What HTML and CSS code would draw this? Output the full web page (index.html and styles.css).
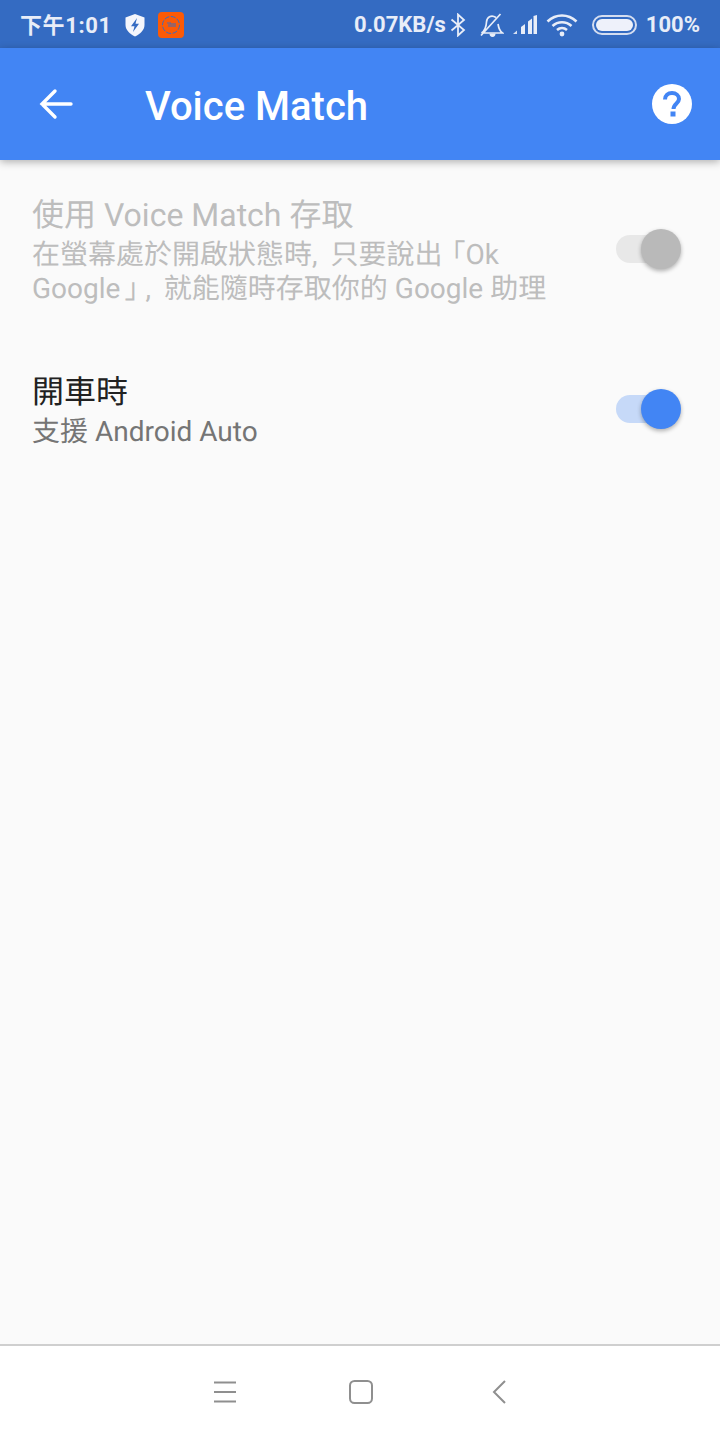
FILE: index.html
```html
<!DOCTYPE html>
<html lang="zh-Hant">

<head>
    <meta charset="UTF-8">
    <meta name="viewport" content="width=device-width, initial-scale=1.0">
    <title>Voice Match</title>
    <link rel="stylesheet" href="styles.css">
</head>

<body>
    <div class="screen">
        <div class="status-bar">
            <div class="status-left">
                <span class="clock">下午1:01</span>
                <svg class="shield" width="22" height="24" viewBox="0 0 22 24">
                    <path d="M11 1 L20.5 4.5 V12 C20.5 17 16.5 20.8 11 23.5 C5.5 20.8 1.5 17 1.5 12 V4.5 Z" fill="#f4f6fc"/>
                    <path d="M13 5 L7 13.2 H10.5 L9 19 L15 10.8 H11.5 Z" fill="#346bc2"/>
                </svg>
                <svg class="mi-icon" width="26" height="26" viewBox="0 0 26 26">
                    <rect width="26" height="26" rx="4" fill="#fb5a06"/>
                    <circle cx="13" cy="13" r="8.5" fill="none" stroke="#3a6cc0" stroke-width="1" stroke-dasharray="5 1.6"/>
                    <path d="M9 11 H13 V15 M11 12 V15 M15 11 V15 M17 11 V15" fill="none" stroke="#3a6cc0" stroke-width="1"/>
                </svg>
            </div>
            <div class="status-right">
                <span class="speed">0.07KB/s</span>
                <svg class="icon-bt" width="16" height="24" viewBox="0 0 16 24">
                    <path d="M1.5 6.5 L14 17 L8 22.5 V1.5 L14 7 L1.5 17.5" fill="none" stroke="#e8edf8" stroke-width="1.8"/>
                </svg>
                <svg class="icon-bell" width="24" height="24" viewBox="0 0 24 24">
                    <path d="M1.5 20 H22.5 C19.5 18 18.5 14 18 11 M16 4.5 C11 1 6.8 4.5 6.5 9 C6.3 13 5 17.5 1.5 20 M1 22.5 L20.5 1" fill="none" stroke="#e8edf8" stroke-width="1.7"/>
                    <path d="M9.5 20.5 A3 3.4 0 0 0 15.5 20.5 Z" fill="#e8edf8"/>
                </svg>
                <svg class="icon-signal" width="24" height="20" viewBox="0 0 24 20">
                    <polygon points="0,19 4,15.5 4,19" fill="#d6e0f2"/>
                    <polygon points="8,19 8,12 12,9 12,19" fill="#e8edf8"/>
                    <polygon points="15,19 15,6.5 19,3.5 19,19" fill="#e8edf8"/>
                    <polygon points="20.5,19 20.5,1 24,0 24,19" fill="#e8edf8"/>
                </svg>
                <svg class="icon-wifi" width="32" height="24" viewBox="0 0 32 24">
                    <path d="M1.5 8.5 C10 0.5 22 0.5 30.5 8.5 M6.5 13 C12 8 20 8 25.5 13 M11 17 C14 14.5 18 14.5 21 17" fill="none" stroke="#e8edf8" stroke-width="2.6"/>
                    <circle cx="16" cy="21" r="2.4" fill="#e8edf8"/>
                </svg>
                <span class="battery"><span class="battery-fill"></span></span>
                <span class="percent">100%</span>
            </div>
        </div>

        <div class="app-bar">
            <svg class="back" width="36" height="32" viewBox="0 0 36 32">
                <path d="M32 16 H3 M16 3 L3 16 L16 29" fill="none" stroke="#fff" stroke-width="3.4" stroke-linecap="round" stroke-linejoin="miter"/>
            </svg>
            <h1 class="title">Voice Match</h1>
            <svg class="help" width="40" height="40" viewBox="0 0 40 40">
                <circle cx="20" cy="20" r="20" fill="#fff"/>
                <path d="M13 15.5 C13 11.5 16 9 20 9 C24 9 27 11.5 27 15 C27 19.5 21.5 19.5 21.5 25" fill="none" stroke="#4285f4" stroke-width="4"/>
                <rect x="18.5" y="27.5" width="5" height="5" fill="#4285f4"/>
            </svg>
        </div>

        <div class="content">
            <div class="setting disabled">
                <div class="setting-text">
                    <div class="setting-title">使用 Voice Match 存取</div>
                    <div class="setting-sub">在螢幕處於開啟狀態時<span class="comma">,</span> 只要說出<span class="open-quote">「</span>Ok<br>Google<span class="close-quote">」</span><span class="comma">,</span> 就能隨時存取你的 Google 助理</div>
                </div>
                <div class="switch"><span class="track"></span><span class="thumb"></span></div>
            </div>
            <div class="setting">
                <div class="setting-text">
                    <div class="setting-title">開車時</div>
                    <div class="setting-sub">支援 Android Auto</div>
                </div>
                <div class="switch on"><span class="track"></span><span class="thumb"></span></div>
            </div>
        </div>

        <div class="nav-bar">
            <svg class="nav-menu" width="24" height="22" viewBox="0 0 24 22">
                <path d="M1 1.5 H23 M1 11 H23 M1 20.5 H23" fill="none" stroke="#8f8f8f" stroke-width="2"/>
            </svg>
            <svg class="nav-home" width="24" height="24" viewBox="0 0 24 24">
                <rect x="1" y="1" width="22" height="22" rx="4.5" fill="none" stroke="#8f8f8f" stroke-width="2"/>
            </svg>
            <svg width="14" height="24" viewBox="0 0 14 24">
                <path d="M13 1 L2 12 L13 23" fill="none" stroke="#8f8f8f" stroke-width="2"/>
            </svg>
        </div>
    </div>
</body>

</html>
```

FILE: styles.css
```css
* {
    box-sizing: border-box;
}

body {
    margin: 0;
    font-family: Roboto, "Noto Sans CJK TC", sans-serif;
}

svg {
    display: block;
    flex: none;
}

.screen {
    width: 720px;
    height: 1440px;
    display: flex;
    flex-direction: column;
    background: #fafafa;
}

/* status bar */
.status-bar {
    height: 48px;
    padding: 1px 20px 0 20px;
    display: flex;
    align-items: center;
    justify-content: space-between;
    background: #346bc2;
    color: #e8edf8;
    font-size: 22px;
    font-weight: 500;
}

.status-left,
.status-right {
    display: flex;
    align-items: center;
}

.clock {
    margin-right: 12px;
    padding-bottom: 3px;
    font-weight: 700;
    letter-spacing: 0.6px;
}

.shield {
    margin-right: 12px;
}

.speed {
    margin-right: 4px;
    font-weight: 700;
}

.percent {
    font-weight: 700;
}

.icon-bt {
    margin-right: 14px;
}

.icon-bell {
    margin-right: 9px;
}

.icon-signal {
    margin-right: 9px;
}

.icon-wifi {
    margin-right: 14px;
}

.battery {
    width: 45px;
    height: 20px;
    margin-right: 9px;
    padding: 2px;
    border: 2px solid #d4ddf0;
    border-radius: 10px;
}

.battery-fill {
    display: block;
    height: 100%;
    border-radius: 6px;
    background: #eef1fa;
}

/* app bar */
.app-bar {
    position: relative;
    height: 112px;
    padding: 0 28px 0 39px;
    display: flex;
    align-items: center;
    background: #4285f4;
    color: #fff;
    box-shadow: 0 2px 8px rgba(0, 0, 0, 0.3);
}

.title {
    flex: 1;
    margin: 4px 0 0 70px;
    font-size: 40px;
    font-weight: 500;
}

/* settings list */
.content {
    flex: 1;
    padding-top: 35px;
    display: flex;
    flex-direction: column;
    gap: 66px;
}

.setting {
    display: flex;
    align-items: center;
    justify-content: space-between;
    padding: 0 38px 0 32px;
    text-rendering: geometricPrecision;
}

.setting-text {
    width: 531px;
}

.setting-title {
    font-size: 32px;
    line-height: 40px;
    color: #212121;
}

.setting-sub {
    margin-top: 3px;
    font-size: 28px;
    line-height: 34px;
    color: #757575;
}

.comma {
    margin-right: 6px;
}

.open-quote {
    margin-left: 9px;
    font-feature-settings: "halt";
}

.close-quote {
    margin: 0 7px 0 4px;
    font-feature-settings: "halt";
}

.disabled .setting-title,
.disabled .setting-sub {
    color: #bdbdbd;
}

.switch {
    position: relative;
    width: 66px;
    height: 40px;
    margin-bottom: 3px;
}

.track {
    position: absolute;
    left: 0;
    top: 6px;
    width: 60px;
    height: 28px;
    border-radius: 14px;
    background: #e8e8e8;
}

.thumb {
    position: absolute;
    right: 1px;
    top: 0;
    width: 40px;
    height: 40px;
    border-radius: 50%;
    background: #b9b9b9;
    box-shadow: 0 2px 4px rgba(0, 0, 0, 0.3);
}

.on .track {
    background: #c6d9f8;
}

.on .thumb {
    background: #4285f4;
}

/* nav bar */
.nav-bar {
    height: 96px;
    padding: 0 0 2px 213px;
    display: flex;
    align-items: center;
    background: #fff;
    border-top: 2px solid #cfcfcf;
}

.nav-menu {
    margin-right: 112px;
}

.nav-home {
    margin-right: 119px;
}
```
